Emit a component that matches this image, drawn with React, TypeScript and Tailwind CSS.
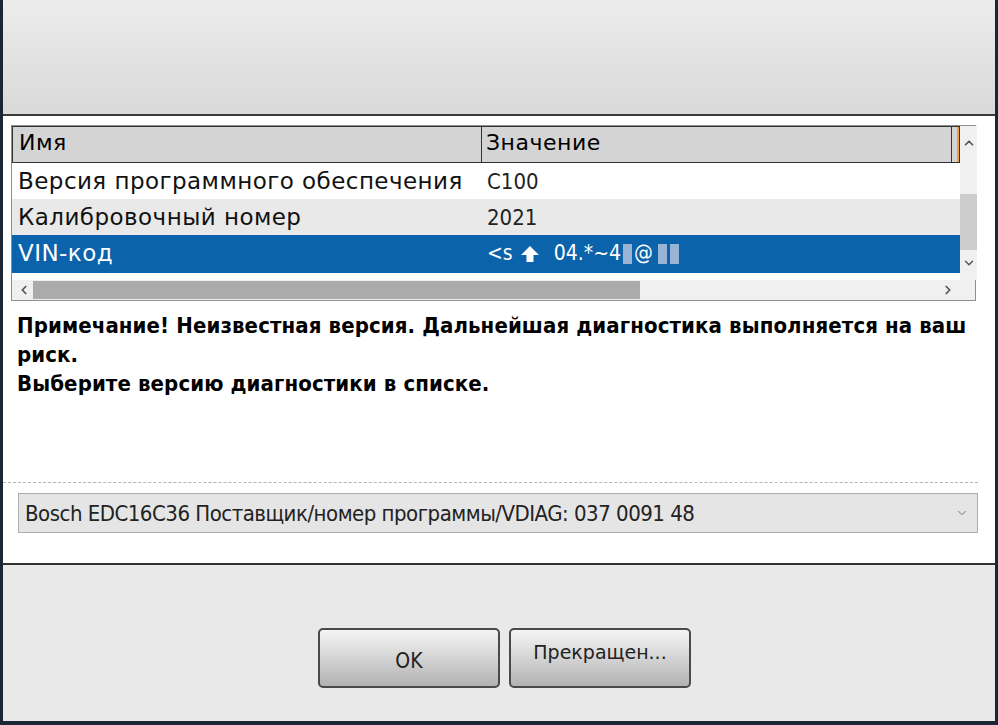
import { ChevronUp, ChevronDown, ChevronLeft, ChevronRight } from "lucide-react"

const cond = { fontFamily: '"DejaVu Sans Condensed", "DejaVu Sans", sans-serif' }
const sans = { fontFamily: '"DejaVu Sans", Verdana, sans-serif' }

const rows = [
  { name: "Версия программного обеспечения", value: "C100", bg: "bg-white" },
  { name: "Калибровочный номер", value: "2021", bg: "bg-[#e9e9e9]" },
]

const App = () => {
  return (
    <div className="w-[998px] h-[725px] bg-white border-l-[3px] border-r-[3px] border-b-[4px] border-[#1c2533] flex flex-col overflow-hidden">
      {/* header */}
      <div className="h-[116px] shrink-0 bg-gradient-to-b from-[#ececec] to-[#d9d9d9] border-b-2 border-[#3b3b3b]" />

      {/* content */}
      <div className="flex-1 flex flex-col bg-white">
        <div className="mt-[9px] ml-[8px] mr-[19px] h-[176px] border border-[#8f8f8f] flex flex-col" style={sans}>
          <div className="flex flex-1">
            <div className="flex-1 flex flex-col">
              <div className="h-[37px] flex bg-[#d4d4d4] border border-[#333] text-[22px] tracking-[0.5px] text-black">
                <div className="w-[469px] border-r border-[#333] px-[6px] leading-[32px]">Имя</div>
                <div className="w-[470px] border-r border-[#333] px-[4px] leading-[32px]">Значение</div>
                <div className="flex-1 bg-white border-l-2 border-[#f0a040] ml-[5px]" />
              </div>
              {rows.map((r) => (
                <div key={r.name} className={`h-[36px] flex ${r.bg} text-[#111]`}>
                  <div className="w-[469px] px-[6px] leading-[36px] whitespace-nowrap text-[23px] tracking-[0.45px]">{r.name}</div>
                  <div className="flex-1 px-[6px] leading-[38px] text-[22px] text-[#222]" style={cond}>
                    {r.value}
                  </div>
                </div>
              ))}
              <div className="h-[38px] flex bg-[#0b63ac] text-white">
                <div className="w-[469px] px-[6px] leading-[36px] text-[23px] tracking-[0.45px]">VIN-код</div>
                <div className="flex-1 px-[6px] flex items-center text-[21px]" style={cond}>
                  <span>&lt;s</span>
                  <svg viewBox="0 0 20 20" className="w-[20px] h-[20px] ml-[7px] shrink-0">
                    <path d="M10 2 L19 11 L13.5 11 L13.5 18 L6.5 18 L6.5 11 L1 11 Z" fill="white" />
                  </svg>
                  <span className="ml-[14px] flex items-center">
                    04.*~4
                    <span className="inline-block w-[9px] h-[20px] bg-[#9ab4d6] mx-[2px]" />
                    @
                    <span className="inline-block w-[9px] h-[20px] bg-[#9ab4d6] ml-[5px]" />
                    <span className="inline-block w-[9px] h-[20px] bg-[#9ab4d6] ml-[3px]" />
                  </span>
                </div>
              </div>
              <div className="h-[6px] bg-white" />
            </div>
            <div className="w-[18px] bg-[#f0f0f0] flex flex-col items-center">
              <ChevronUp size={14} strokeWidth={3} className="text-[#555] mt-[10px]" />
              <div className="w-[17px] h-[56px] bg-[#cdcdcd] mt-[44px]" />
              <ChevronDown size={14} strokeWidth={2.5} className="text-[#555] mt-[6px]" />
            </div>
          </div>
          <div className="h-[20px] bg-[#f0f0f0] flex items-center">
            <ChevronLeft size={14} strokeWidth={3} className="text-[#555] ml-[3px] w-[18px]" />
            <div className="w-[607px] h-[18px] bg-[#ababab]" />
            <div className="flex-1" />
            <ChevronRight size={14} strokeWidth={3} className="text-[#555] mr-[20px]" />
          </div>
        </div>

        <div className="ml-[14px] mr-[16px] mt-[10px] text-[22px] font-bold leading-[29px] text-black tracking-[0.1px]" style={cond}>
          <p>Примечание! Неизвестная версия. Дальнейшая диагностика выполняется на ваш риск.</p>
          <p>Выберите версию диагностики в списке.</p>
        </div>

        <div className="mt-[84px] mr-[17px] border-t border-dashed border-[#b5b5b5]" />

        <div className="mt-[10px] ml-[15px] mr-[17px] h-[40px] bg-[#e5e5e5] border border-[#adadad] flex items-center justify-between px-[6px]">
          <span className="text-[22px] text-[#222] tracking-[-0.5px]" style={cond}>
            Bosch EDC16C36 Поставщик/номер программы/VDIAG: 037 0091 48
          </span>
          <ChevronDown size={14} strokeWidth={1.5} className="text-[#666] mr-[2px]" />
        </div>

        <div className="flex-1" />
      </div>

      {/* footer */}
      <div className="h-[158px] shrink-0 bg-[#e9e9e9] border-t-2 border-[#333] flex justify-center gap-[9px] pt-[63px] pl-[11px]">
        <button className="w-[182px] h-[60px] rounded-[5px] border-2 border-[#4a4a4a] bg-gradient-to-b from-[#f5f5f5] via-[#d4d4d4] to-[#b2b2b2] text-[21px] text-[#222] pt-[8px]" style={cond}>
          OK
        </button>
        <button className="w-[182px] h-[60px] rounded-[5px] border-2 border-[#4a4a4a] bg-gradient-to-b from-[#f5f5f5] via-[#d4d4d4] to-[#b2b2b2] text-[19px] text-[#222] pb-[12px]" style={sans}>
          Прекращен...
        </button>
      </div>
    </div>
  )
}

export default App
